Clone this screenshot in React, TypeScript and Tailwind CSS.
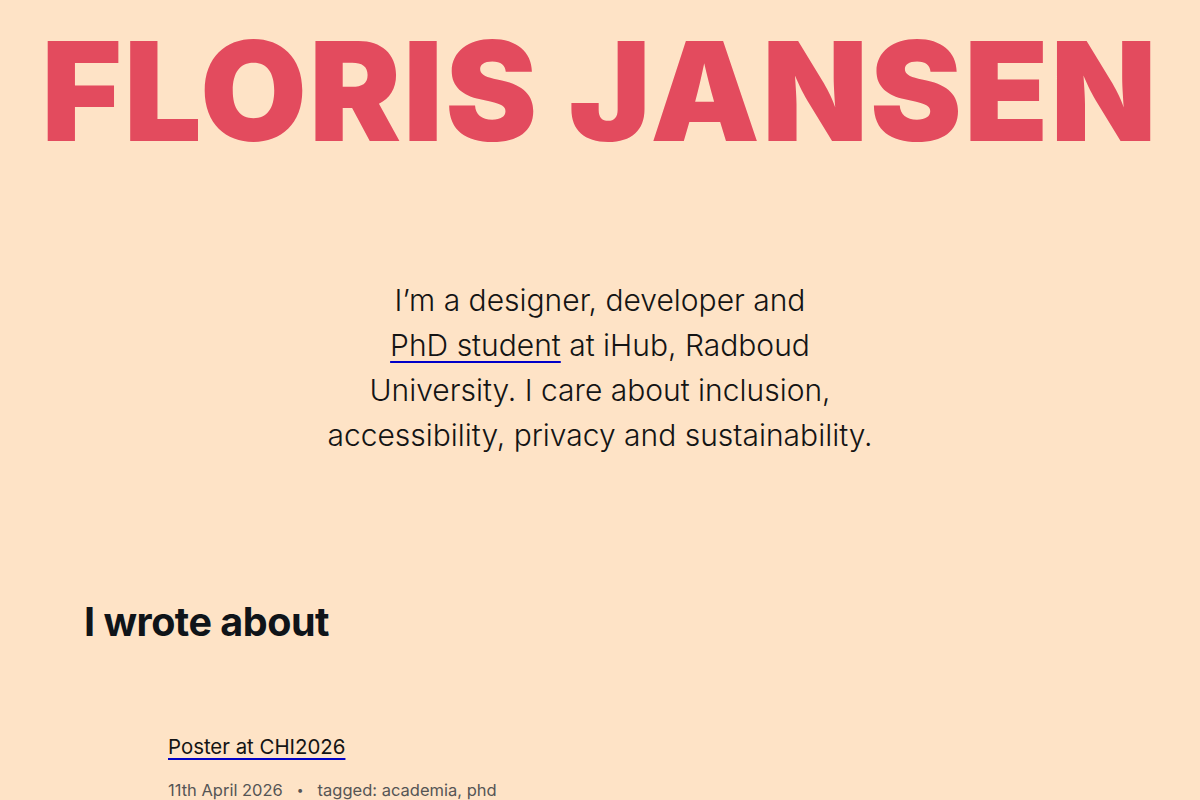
export default function App() {
  return (
    <div className="min-h-[800px] bg-[#fee3c6] text-[#141414] font-['Inter',sans-serif] overflow-hidden">
      <header className="pt-[22px] text-center">
        <h1 className="font-['Inter',sans-serif] font-black text-[#e34b5e] text-[138px] leading-[1] tracking-[2px] whitespace-nowrap">
          FLORIS JANSEN
        </h1>
      </header>

      <section className="mt-[118px] flex justify-center">
        <p className="max-w-[560px] text-center text-[30px] leading-[45px] font-light">
          I’m a designer, developer and
          <br />
          <a href="#" className="underline decoration-[#0000c8] decoration-2 underline-offset-[5px]">
            PhD student
          </a>{" "}
          at iHub, Radboud University. I care about inclusion, accessibility, privacy and sustainability.
        </p>
      </section>

      <section className="mt-[140px] px-[84px]">
        <h2 className="text-[39.5px] leading-[48px] font-bold tracking-[-0.5px] text-[#0f1419]">I wrote about</h2>

        <ul className="mt-[87px] pl-[84px]">
          <li>
            <a href="#" className="text-[20.4px] leading-[28px] underline decoration-[#0000c8] decoration-2 underline-offset-[4px]">
              Poster at CHI2026
            </a>
            <div className="mt-[18px] flex items-center gap-[14px] text-[16.5px] leading-[22px] text-[#555]">
              <span>11th April 2026</span>
              <span className="text-[12px]">•</span>
              <span>tagged: academia, phd</span>
            </div>
          </li>
        </ul>
      </section>
    </div>
  );
}
